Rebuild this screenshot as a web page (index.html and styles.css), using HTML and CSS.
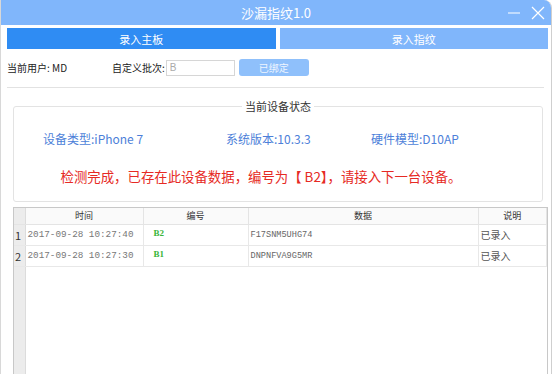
FILE: index.html
```html
<!DOCTYPE html>
<html lang="zh-CN">
<head>
    <meta charset="UTF-8">
    <title>沙漏指纹1.0</title>
    <link rel="stylesheet" href="styles.css">
</head>
<body>
    <div class="window">
        <div class="titlebar">
            <span class="title">沙漏指纹1.0</span>
            <div class="controls">
                <svg width="14" height="14" viewBox="0 0 14 14"><line x1="1" y1="7" x2="13" y2="7" stroke="#fff" stroke-width="1.2"/></svg>
                <svg width="14" height="14" viewBox="0 0 14 14"><path d="M1 1 L13 13 M13 1 L1 13" stroke="#fff" stroke-width="1.2"/></svg>
            </div>
        </div>
        <div class="tabs">
            <div class="tab active">录入主板</div>
            <div class="tab">录入指纹</div>
        </div>
        <div class="toolbar">
            <span class="user">当前用户: MD</span>
            <label class="batch-label">自定义批次:</label>
            <input class="batch-input" type="text" value="B">
            <button class="bind-btn">已绑定</button>
        </div>
        <div class="divider"></div>
        <fieldset class="status">
            <legend>当前设备状态</legend>
            <div class="info">
                <span class="info-type">设备类型:iPhone 7</span>
                <span class="info-ver">系统版本:10.3.3</span>
                <span>硬件模型:D10AP</span>
            </div>
            <div class="message">检测完成，已存在此设备数据，编号为【 B2】，请接入下一台设备。</div>
        </fieldset>
        <div class="grid">
            <table>
                <colgroup>
                    <col class="w-idx">
                    <col class="w-time">
                    <col class="w-code">
                    <col class="w-data">
                    <col>
                </colgroup>
                <thead>
                    <tr>
                        <th class="idx"></th>
                        <th>时间</th>
                        <th>编号</th>
                        <th>数据</th>
                        <th>说明</th>
                    </tr>
                </thead>
                <tbody>
                    <tr>
                        <td class="idx">1</td>
                        <td class="mono">2017-09-28 10:27:40</td>
                        <td class="code">B2</td>
                        <td class="data">F17SNM5UHG74</td>
                        <td class="note">已录入</td>
                    </tr>
                    <tr>
                        <td class="idx">2</td>
                        <td class="mono">2017-09-28 10:27:30</td>
                        <td class="code">B1</td>
                        <td class="data">DNPNFVA9G5MR</td>
                        <td class="note">已录入</td>
                    </tr>
                </tbody>
            </table>
            <div class="grid-empty"></div>
        </div>
    </div>
</body>
</html>
```

FILE: styles.css
```css
body {
    margin: 0;
    background: #fff;
    font-family: "Noto Sans CJK SC", "Liberation Sans", sans-serif;
    overflow: hidden;
}
.window {
    width: 552px;
    height: 374px;
    border-left: 1px solid #d8d8d8;
    border-right: 1px solid #cfcfcf;
    border-top-right-radius: 8px;
    box-sizing: border-box;
    display: flex;
    flex-direction: column;
    background: #fff;
    overflow: hidden;
}
.titlebar {
    height: 25px;
    background: #80b6fb;
    display: flex;
    align-items: center;
    justify-content: center;
    position: relative;
    flex-shrink: 0;
}
.title {
    color: #fff;
    font-size: 13px;
}
.controls {
    position: absolute;
    right: 6px;
    top: 6px;
    display: flex;
    gap: 10px;
}
.tabs {
    display: flex;
    gap: 4px;
    padding: 3px 3px 0 6px;
    height: 21px;
}
.tab {
    flex: 1;
    background: #80b6fb;
    color: #fff;
    font-size: 11px;
    display: flex;
    align-items: center;
    justify-content: center;
}
.tab.active {
    background: #2f8cf3;
}
.toolbar {
    display: flex;
    align-items: center;
    height: 17px;
    margin-top: 10px;
    padding-left: 6px;
    font-size: 10px;
    color: #222;
}
.user {
    width: 105px;
}
.batch-input {
    width: 69px;
    height: 16px;
    box-sizing: border-box;
    border: 1px solid #d6d6d6;
    margin: 0 4px 0 1px;
    padding: 0 3px;
    font-size: 10px;
    color: #aaa;
    font-family: "Liberation Sans", sans-serif;
}
.bind-btn {
    width: 70px;
    height: 17px;
    border: none;
    border-radius: 3px;
    background: #8fc0fb;
    color: #eef5ff;
    font-size: 10px;
    font-family: "Noto Sans CJK SC", sans-serif;
    padding: 0;
}
.divider {
    margin: 11px 7px 0 6px;
    border-top: 1px solid #e2e2e2;
}
.status {
    margin: 10px 8px 0 12px;
    border: 1px solid #e3e3e3;
    border-radius: 3px;
    padding: 0;
    height: 104px;
    box-sizing: border-box;
    flex-shrink: 0;
}
.status legend {
    margin: 0 auto;
    padding: 0 3px;
    font-size: 11px;
    color: #333;
}
.info {
    display: flex;
    padding: 16px 0 0 29px;
    font-size: 12px;
    color: #4d7fd9;
}
.info-type {
    width: 183px;
}
.info-ver {
    width: 145px;
}
.message {
    text-align: center;
    margin-top: 19px;
    padding-right: 34px;
    font-size: 13.4px;
    color: #e62a24;
}
.grid {
    margin: 5px 3px 0 12px;
    flex: 1;
    border: 1px solid #c8c8c8;
    border-bottom: none;
    display: flex;
    flex-direction: column;
}
table {
    width: 100%;
    table-layout: fixed;
    border-collapse: collapse;
    font-size: 9px;
}
.w-idx { width: 11px; }
.w-time { width: 118px; }
.w-code { width: 105px; }
.w-data { width: 230px; }
th {
    height: 16px;
    line-height: 14px;
    font-weight: normal;
    color: #333;
    border-right: 1px solid #e4e4e4;
    border-bottom: 1px solid #e4e4e4;
    background: #fafafa;
    padding: 0;
}
td {
    height: 20px;
    line-height: 14px;
    border-right: 1px solid #e8e8e8;
    border-bottom: 1px solid #e8e8e8;
    padding: 0 2px;
    color: #444;
    white-space: nowrap;
    overflow: hidden;
}
.idx {
    background: #ececec;
    font-size: 11px;
    color: #333;
    padding: 0 1px;
    border-right: 1px solid #dcdcdc;
}
.mono {
    font-family: "Liberation Mono", monospace;
    font-size: 9.3px;
    color: #777;
}
.code {
    color: #39b539;
    font-family: "Liberation Serif", serif;
    font-weight: bold;
    font-size: 9px;
    padding-left: 10px;
    vertical-align: top;
    line-height: 16px;
}
.data {
    font-family: "Liberation Mono", monospace;
    font-size: 8.6px;
    color: #666;
}
.note {
    font-size: 10px;
    color: #555;
}
.grid-empty {
    flex: 1;
    background: linear-gradient(to right, #ececec 11px, #dcdcdc 11px, #dcdcdc 12px, #fff 12px);
}
```
